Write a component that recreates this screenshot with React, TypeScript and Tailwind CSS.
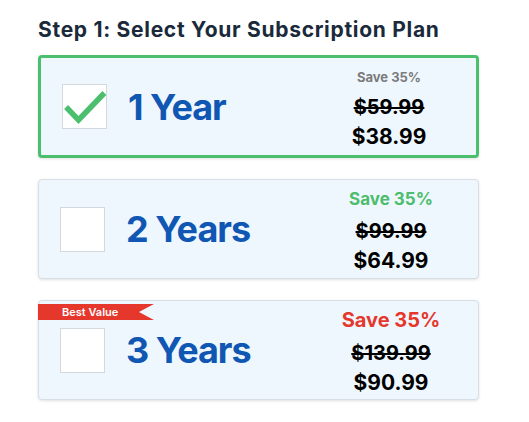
import React from "react";

type Plan = {
  label: string;
  save: string;
  was: string;
  now: string;
  selected?: boolean;
  best?: boolean;
  saveClass: string;
};

const plans: Plan[] = [
  { label: "1 Year", save: "Save 35%", was: "$59.99", now: "$38.99", selected: true, saveClass: "text-[13px] text-[#7b7b7b] leading-[16px]" },
  { label: "2 Years", save: "Save 35%", was: "$99.99", now: "$64.99", saveClass: "text-[17px] text-[#4cbd6c] leading-[20px]" },
  { label: "3 Years", save: "Save 35%", was: "$139.99", now: "$90.99", best: true, saveClass: "text-[20px] text-[#e5372c] leading-[22px]" },
];

function Check() {
  return (
    <svg width="45" height="45" viewBox="0 0 45 45" className="absolute inset-0">
      <path d="M5 24 L15.5 35 L39.5 10" fill="none" stroke="#4cbf6f" strokeWidth="5.5" strokeLinecap="square" strokeLinejoin="miter" />
    </svg>
  );
}

function Card({ p }: { p: Plan }) {
  return (
    <div
      className={
        "relative flex items-center rounded-[4px] bg-[#eff7fe] shadow-[0_1px_3px_rgba(0,0,0,0.12)] " +
        (p.selected ? "h-[103px] border-[3px] border-[#4cbf6f]" : "h-[100px] border border-[#d9dee4]")
      }
    >
      {p.best && (
        <div className="absolute left-[-1px] top-[3px] h-[16px] w-[116px] bg-[#e5372c] [clip-path:polygon(0_0,100%_0,87%_50%,100%_100%,0_100%)]">
          <span className="absolute left-[24px] top-0 text-[11px] leading-[16px] font-semibold text-white">Best Value</span>
        </div>
      )}
      <div className="relative ml-[21px] h-[45px] w-[45px] shrink-0 border border-[#d3d8dd] bg-white">
        {p.selected && <Check />}
      </div>
      <div className="ml-[21px] flex-1 text-[36px] font-bold leading-none tracking-[-1px] text-[#1056b3]">{p.label}</div>
      <div className="mr-[7px] mt-[6px] flex w-[160px] flex-col items-center font-bold text-black">
        <div className={"font-bold " + p.saveClass}>{p.save}</div>
        <div className="mt-[9px] text-[20px] leading-[26px] line-through decoration-[2px]">{p.was}</div>
        <div className="mt-[3px] text-[21px] leading-[28px]">{p.now}</div>
      </div>
    </div>
  );
}

export default function App() {
  return (
    <div className="h-[422px] w-[529px] bg-white pl-[38px] pt-[16px] font-['Inter',sans-serif]">
      <div className="w-[441px]">
        <h1 className="text-[21px] font-bold leading-[28px] tracking-[0.7px] text-[#1a2a3a]">Step 1: Select Your Subscription Plan</h1>
        <div className="mt-[11px] flex flex-col gap-[21px]">
          {plans.map((p) => (
            <Card key={p.label} p={p} />
          ))}
        </div>
      </div>
    </div>
  );
}
